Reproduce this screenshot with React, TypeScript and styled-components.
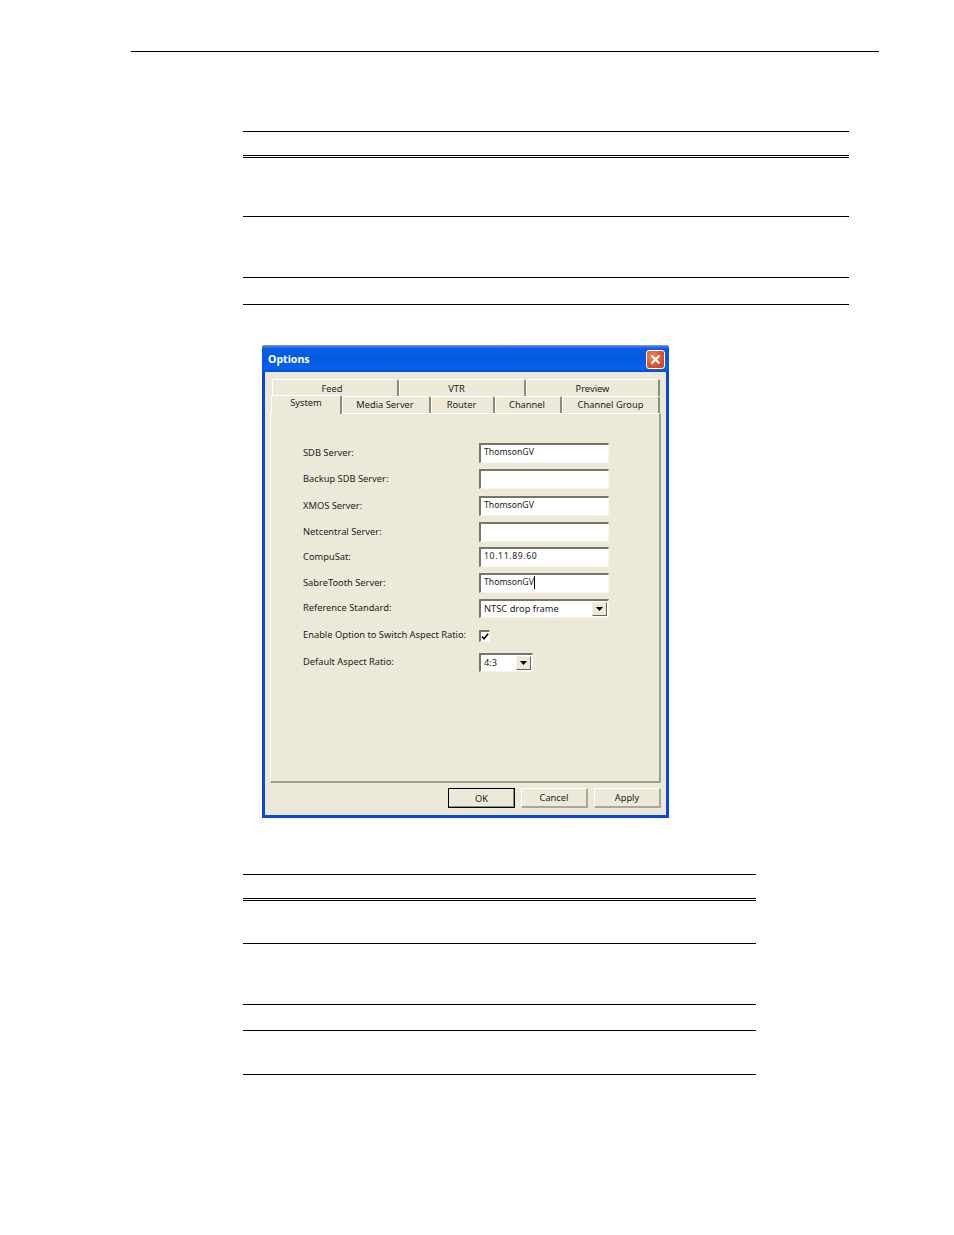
import React from 'react';
import styled, { createGlobalStyle } from 'styled-components';

const GlobalStyle = createGlobalStyle`
  html, body {
    margin: 0;
    padding: 0;
    background: #fff;
  }
`;

const Page = styled.div`
  width: 954px;
  height: 1235px;
  box-sizing: border-box;
  padding: 51px 75px 0 131px;
  overflow: hidden;
`;

const HeaderRule = styled.div`
  height: 1px;
  background: #000;
  margin-bottom: 79px;
`;

const RuleTable = styled.div<{ $width: number }>`
  width: ${(p) => p.$width}px;
  margin-left: 112px;
  border-top: 1px solid #000;
`;

const TableRow = styled.div<{ $height: number; $double?: boolean }>`
  height: ${(p) => p.$height}px;
  box-sizing: border-box;
  border-bottom: ${(p) => (p.$double ? '3px double #000' : '1px solid #000')};
`;

const DialogSlot = styled.div`
  margin: 40px 0 56px 131px;
`;

const Dialog = styled.div`
  width: 407px;
  height: 473px;
  box-sizing: border-box;
  display: flex;
  flex-direction: column;
  background: #ece9d8;
  border: 3px solid #0a47d6;
  border-top: 0;
  border-radius: 3px 3px 0 0;
  font-family: 'Noto Sans', sans-serif;
  font-size: 9.3px;
  color: #222;
`;

const TitleBar = styled.div`
  height: 27px;
  margin: 0 -3px;
  padding: 0 3px 0 6px;
  display: flex;
  align-items: center;
  justify-content: space-between;
  flex-shrink: 0;
  background: linear-gradient(#3a7ff0 0, #0a5ce6 3px, #0458e0 12px, #0a62ec 22px, #0648d0 27px);
  border-top: 1px solid #8a93a8;
  box-sizing: border-box;
  border-radius: 3px 3px 0 0;
`;

const TitleText = styled.span`
  color: #fff;
  font-weight: 700;
  font-size: 10.6px;
`;

const CloseButton = styled.div`
  width: 19px;
  height: 19px;
  margin-right: 1px;
  box-sizing: border-box;
  border: 1px solid #fff;
  border-radius: 3px;
  background: radial-gradient(circle at 35% 35%, #ec8a68, #d9491f 70%);
  display: flex;
  align-items: center;
  justify-content: center;
`;

const Body = styled.div`
  flex: 1;
  display: flex;
  flex-direction: column;
  padding: 7px 5px 7px 5px;
`;

const TabRow = styled.div<{ $back?: boolean }>`
  display: flex;
  align-items: flex-end;
  height: 17px;
  padding-left: ${(p) => (p.$back ? 2 : 1)}px;
`;

const Tab = styled.div<{ $width: number; $active?: boolean; $front?: boolean; $nudge: number }>`
  width: ${(p) => p.$width}px;
  height: ${(p) => (p.$active ? 19 : 17)}px;
  flex-shrink: 0;
  box-sizing: border-box;
  display: flex;
  align-items: center;
  justify-content: center;
  padding-right: ${(p) => p.$nudge}px;
  padding-bottom: ${(p) => (p.$active ? 5 : p.$front ? 2 : 0)}px;
  background: #ece9d8;
  border-top: 1px solid #fff;
  border-left: 1px solid #fff;
  border-right: 2px solid #8d8b7c;
  border-radius: 2px 2px 0 0;
  position: relative;
  z-index: ${(p) => (p.$active ? 2 : 1)};
  margin-bottom: ${(p) => (p.$active ? -1 : 0)}px;
`;

const Panel = styled.div`
  height: 370px;
  box-sizing: border-box;
  border-left: 1px solid #fff;
  border-top: 1px solid #fff;
  border-right: 2px solid #a09e90;
  border-bottom: 2px solid #a09e90;
  padding: 29px 0 0 32px;
  display: flex;
  flex-direction: column;
`;

const FormRow = styled.div<{ $top?: number }>`
  display: grid;
  grid-template-columns: 176px auto;
  align-items: center;
  margin-top: ${(p) => p.$top ?? 0}px;
`;

const Label = styled.span`
  white-space: nowrap;
  line-height: 12px;
  padding-bottom: 1px;
`;

const sunken = `
  box-sizing: border-box;
  background: #fff;
  border-top: 2px solid #77756a;
  border-left: 2px solid #77756a;
  border-right: 1px solid #f6f5ee;
  border-bottom: 1px solid #f6f5ee;
`;

const TextField = styled.div<{ $numeric?: boolean }>`
  ${sunken}
  width: 130px;
  height: 20px;
  padding: 0 0 3px 3px;
  display: flex;
  align-items: center;
  font-size: 8.7px;
  letter-spacing: ${(p) => (p.$numeric ? 0.6 : 0)}px;
`;

const Caret = styled.span`
  width: 1px;
  height: 13px;
  background: #000;
`;

const Combo = styled.div<{ $width: number }>`
  ${sunken}
  width: ${(p) => p.$width}px;
  height: 19px;
  padding: 0 1px 0 3px;
  display: flex;
  align-items: center;
  justify-content: space-between;
`;

const ComboText = styled.span`
  padding-bottom: 2px;
`;

const ComboArrow = styled.div`
  width: 15px;
  height: 14px;
  box-sizing: border-box;
  background: #ece9d8;
  border-top: 1px solid #f4f3ea;
  border-left: 1px solid #f4f3ea;
  border-right: 1px solid #66655c;
  border-bottom: 1px solid #66655c;
  display: flex;
  align-items: center;
  justify-content: center;
`;

const CheckBox = styled.div`
  ${sunken}
  width: 11px;
  height: 12px;
  display: flex;
  align-items: center;
  justify-content: center;
`;

const ButtonBar = styled.div`
  display: flex;
  justify-content: flex-end;
  gap: 6px;
  padding-top: 5px;
`;

const Button = styled.div<{ $primary?: boolean }>`
  width: 67px;
  height: 20px;
  box-sizing: border-box;
  display: flex;
  align-items: center;
  justify-content: center;
  background: #ece9d8;
  border-top: 1px solid ${(p) => (p.$primary ? '#000' : '#fff')};
  border-left: 1px solid ${(p) => (p.$primary ? '#000' : '#fff')};
  border-right: ${(p) => (p.$primary ? '1px solid #000' : '2px solid #aca899')};
  border-bottom: ${(p) => (p.$primary ? '1px solid #000' : '2px solid #aca899')};
  box-shadow: ${(p) => (p.$primary ? 'inset -1px -1px 0 #8d8b7c' : 'none')};
`;

const Arrow = () => (
  <svg width="7" height="4" viewBox="0 0 7 4">
    <path d="M0 0h7L3.5 4z" fill="#000" />
  </svg>
);

const backTabs = [
  { label: 'Feed', width: 127, nudge: 6 },
  { label: 'VTR', width: 127, nudge: 11 },
  { label: 'Preview', width: 134, nudge: 0 },
];

const frontTabs = [
  { label: 'System', width: 71, active: true, nudge: 0 },
  { label: 'Media Server', width: 89, nudge: 2 },
  { label: 'Router', width: 64, nudge: 2 },
  { label: 'Channel', width: 67, nudge: 2 },
  { label: 'Channel Group', width: 98, nudge: 0 },
];

export default function App() {
  return (
    <Page>
      <GlobalStyle />
      <HeaderRule />
      <RuleTable $width={606}>
        <TableRow $height={26} $double />
        <TableRow $height={59} />
        <TableRow $height={61} />
        <TableRow $height={27} />
      </RuleTable>
      <DialogSlot>
        <Dialog>
          <TitleBar>
            <TitleText>Options</TitleText>
            <CloseButton>
              <svg width="11" height="11" viewBox="0 0 11 11">
                <path d="M1.5 1.5l8 8M9.5 1.5l-8 8" stroke="#fff" strokeWidth="2" />
              </svg>
            </CloseButton>
          </TitleBar>
          <Body>
            <TabRow $back>
              {backTabs.map((t) => (
                <Tab key={t.label} $width={t.width} $nudge={t.nudge}>{t.label}</Tab>
              ))}
            </TabRow>
            <TabRow>
              {frontTabs.map((t) => (
                <Tab key={t.label} $front $width={t.width} $active={t.active} $nudge={t.nudge}>{t.label}</Tab>
              ))}
            </TabRow>
            <Panel>
              <FormRow>
                <Label>SDB Server:</Label>
                <TextField>ThomsonGV</TextField>
              </FormRow>
              <FormRow $top={6}>
                <Label>Backup SDB Server:</Label>
                <TextField />
              </FormRow>
              <FormRow $top={7}>
                <Label>XMOS Server:</Label>
                <TextField>ThomsonGV</TextField>
              </FormRow>
              <FormRow $top={6}>
                <Label>Netcentral Server:</Label>
                <TextField />
              </FormRow>
              <FormRow $top={5}>
                <Label>CompuSat:</Label>
                <TextField $numeric>10.11.89.60</TextField>
              </FormRow>
              <FormRow $top={6}>
                <Label>SabreTooth Server:</Label>
                <TextField>ThomsonGV<Caret /></TextField>
              </FormRow>
              <FormRow $top={6}>
                <Label>Reference Standard:</Label>
                <Combo $width={130}>
                  <ComboText>NTSC drop frame</ComboText>
                  <ComboArrow><Arrow /></ComboArrow>
                </Combo>
              </FormRow>
              <FormRow $top={11}>
                <Label>Enable Option to Switch Aspect Ratio:</Label>
                <CheckBox>
                  <svg width="9" height="9" viewBox="0 0 9 9">
                    <path d="M1 4.5l2.4 2.6L8 1.5" stroke="#000" strokeWidth="1.8" fill="none" />
                  </svg>
                </CheckBox>
              </FormRow>
              <FormRow $top={11}>
                <Label>Default Aspect Ratio:</Label>
                <Combo $width={54}>
                  <ComboText>4:3</ComboText>
                  <ComboArrow><Arrow /></ComboArrow>
                </Combo>
              </FormRow>
            </Panel>
            <ButtonBar>
              <Button $primary>OK</Button>
              <Button>Cancel</Button>
              <Button>Apply</Button>
            </ButtonBar>
          </Body>
        </Dialog>
      </DialogSlot>
      <RuleTable $width={513}>
        <TableRow $height={26} $double />
        <TableRow $height={43} />
        <TableRow $height={61} />
        <TableRow $height={26} />
        <TableRow $height={44} />
      </RuleTable>
    </Page>
  );
}
